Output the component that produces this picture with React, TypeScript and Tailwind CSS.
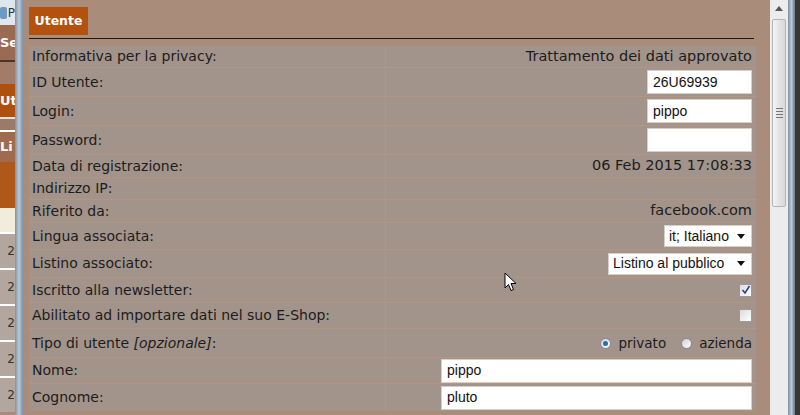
import React from "react";

const LABEL_FONT = { fontFamily: '"DejaVu Sans", Verdana, sans-serif' };
const INPUT_FONT = { fontFamily: '"Liberation Sans", Arial, sans-serif' };

function TextBox({ value, width }: { value: string; width: string }) {
  return (
    <div
      className={`${width} h-[24px] bg-white border border-[#d8d0c8] flex items-center px-[5px] text-[14px] text-[#111]`}
      style={INPUT_FONT}
    >
      {value}
    </div>
  );
}

function SelectBox({ value, width }: { value: string; width: string }) {
  return (
    <div
      className={`${width} h-[22px] bg-white border border-[#d8d0c8] flex items-center justify-between pl-[4px] pr-[6px] text-[14px] text-[#111]`}
      style={INPUT_FONT}
    >
      <span>{value}</span>
      <svg width="8" height="5" viewBox="0 0 8 5">
        <path d="M0 0 L8 0 L4 5 Z" fill="#111" />
      </svg>
    </div>
  );
}

function Check({ checked }: { checked?: boolean }) {
  return (
    <div className="w-[13px] h-[13px] border border-[#9a9a9a] bg-gradient-to-br from-[#dcdcdc] to-[#ffffff] flex items-center justify-center">
      {checked && (
        <svg width="10" height="10" viewBox="0 0 10 10">
          <path d="M1.5 5 L4 8 L8.5 1" stroke="#2a3f9e" strokeWidth="1.6" fill="none" />
        </svg>
      )}
    </div>
  );
}

function Radio({ checked }: { checked?: boolean }) {
  return (
    <div className="w-[11px] h-[11px] rounded-full border border-[#8a8a8a] bg-gradient-to-br from-[#d0d0d0] to-[#ffffff] flex items-center justify-center">
      {checked && <div className="w-[5px] h-[5px] rounded-full bg-[#1c73b8]" />}
    </div>
  );
}

type Row = { label: React.ReactNode; h: string; value?: React.ReactNode; first?: boolean };

const ROWS: Row[] = [
  { label: "Informativa per la privacy:", h: "h-[21px]", value: "Trattamento dei dati approvato", first: true },
  { label: "ID Utente:", h: "h-[29px]", value: <TextBox value="26U69939" width="w-[105px]" /> },
  { label: "Login:", h: "h-[29px]", value: <TextBox value="pippo" width="w-[105px]" /> },
  { label: "Password:", h: "h-[29px]", value: <TextBox value="" width="w-[105px]" /> },
  { label: "Data di registrazione:", h: "h-[23px]", value: "06 Feb 2015 17:08:33" },
  { label: "Indirizzo IP:", h: "h-[22px]", value: "" },
  { label: "Riferito da:", h: "h-[23px]", value: "facebook.com" },
  { label: "Lingua associata:", h: "h-[27px]", value: <SelectBox value="it; Italiano" width="w-[88px]" /> },
  { label: "Listino associato:", h: "h-[28px]", value: <SelectBox value="Listino al pubblico" width="w-[144px]" /> },
  { label: "Iscritto alla newsletter:", h: "h-[25px]", value: <Check checked /> },
  { label: "Abilitato ad importare dati nel suo E-Shop:", h: "h-[26px]", value: <Check /> },
  {
    label: (
      <span>
        Tipo di utente <i>[opzionale]</i>:
      </span>
    ),
    h: "h-[29px]",
    value: (
      <div className="flex items-center text-[13.5px]">
        <Radio checked />
        <span className="ml-[7px] mr-[15px]">privato</span>
        <Radio />
        <span className="ml-[7px]">azienda</span>
      </div>
    ),
  },
  { label: "Nome:", h: "h-[26px]", value: <TextBox value="pippo" width="w-[311px]" /> },
  { label: "Cognome:", h: "h-[28px]", value: <TextBox value="pluto" width="w-[311px]" /> },
];

function BackgroundLeft() {
  return (
    <div className="w-[15px] shrink-0 flex flex-col bg-[#a88b7c] overflow-hidden text-white font-bold text-[13px]" style={LABEL_FONT}>
      <div className="h-[25px] bg-[#dfe6ee] flex items-center gap-[1px]">
        <div className="w-[9px] h-[12px] bg-[#6f98c4] rounded-[2px]" />
        <span className="text-[#333] font-normal text-[12px]">P</span>
      </div>
      <div className="h-[35px] bg-[#9b6a52] flex items-center">Se</div>
      <div className="h-[2px] bg-[#4a3328]" />
      <div className="h-[22px] bg-[#a27c68]" />
      <div className="h-[33px] bg-[#b0500f] flex items-center">Ut</div>
      <div className="h-[2px] bg-[#e8e0d8]" />
      <div className="h-[11px] bg-[#9a7a68]" />
      <div className="h-[2px] bg-[#ffffff]" />
      <div className="h-[30px] bg-[#a06a4c] flex items-center">Li</div>
      <div className="h-[46px] bg-[#b0581a]" />
      <div className="h-[24px] bg-[#f2ecdc]" />
      {[0, 1, 2, 3, 4].map((i) => (
        <div key={i} className="h-[36px] bg-[#b3a69e] border-t-2 border-white flex items-center justify-end text-[#333] font-normal text-[12px]">
          2
        </div>
      ))}
    </div>
  );
}

export default function App() {
  return (
    <div className="w-[800px] h-[415px] flex overflow-hidden bg-[#2f2f2f] relative">
      <BackgroundLeft />
      <div className="w-[8px] shrink-0 bg-gradient-to-r from-[#8a8f96] via-[#b8cadb] to-[#7d8fa4]" />
      <div className="flex-1 bg-[#a98c7a] pl-[6px] pr-[14px] pt-[7px] overflow-hidden" style={LABEL_FONT}>
        <div className="w-[59px] h-[28px] bg-[#b3510f] text-white font-bold text-[12.5px] flex items-center justify-center">
          Utente
        </div>
        <div className="mt-[3px] h-[1px] bg-[#1a1a1a] mr-[2px]" />
        <div className="mt-[7px] text-[14px] text-[#1c1c1c]">
          {ROWS.map((r, i) => (
            <div key={i} className={`flex ${r.h} ${r.first ? "" : "border-t border-[#b49482]"} bg-[#a3948b]`}>
              <div className="w-[357px] shrink-0 border-r border-[#b49482] flex items-center pl-[3px] whitespace-nowrap">
                {r.label}
              </div>
              <div className="flex-1 flex items-center justify-end pr-[4px] whitespace-nowrap text-[14.5px]">{r.value}</div>
            </div>
          ))}
        </div>
      </div>
      <div className="w-[18px] shrink-0 bg-[#ececec] flex flex-col items-center pt-[6px]">
        <svg width="8" height="5" viewBox="0 0 8 5">
          <path d="M0 5 L8 5 L4 0 Z" fill="#555" />
        </svg>
        <div className="mt-[8px] w-[14px] h-[188px] rounded-[2px] border border-[#b4b4b4] bg-gradient-to-r from-[#f4f4f4] via-[#e4e4e4] to-[#d8d8d8] flex flex-col items-center justify-center gap-[2px]">
          <div className="w-[7px] h-[1px] bg-[#777]" />
          <div className="w-[7px] h-[1px] bg-[#777]" />
          <div className="w-[7px] h-[1px] bg-[#777]" />
          <div className="w-[7px] h-[1px] bg-[#777]" />
        </div>
      </div>
      <div className="w-[7px] shrink-0 bg-gradient-to-r from-[#7d8fa4] via-[#b8cadb] to-[#6e7480]" />
      <div className="w-[5px] shrink-0 bg-[#3a3634]" />
      <svg className="absolute left-[504px] top-[272px]" width="13" height="20" viewBox="0 0 13 20">
        <path d="M1 1 L1 16 L4.5 12.5 L7 18.5 L9.5 17.5 L7 11.5 L12 11.5 Z" fill="#fff" stroke="#000" strokeWidth="1" strokeLinejoin="round" />
      </svg>
    </div>
  );
}
